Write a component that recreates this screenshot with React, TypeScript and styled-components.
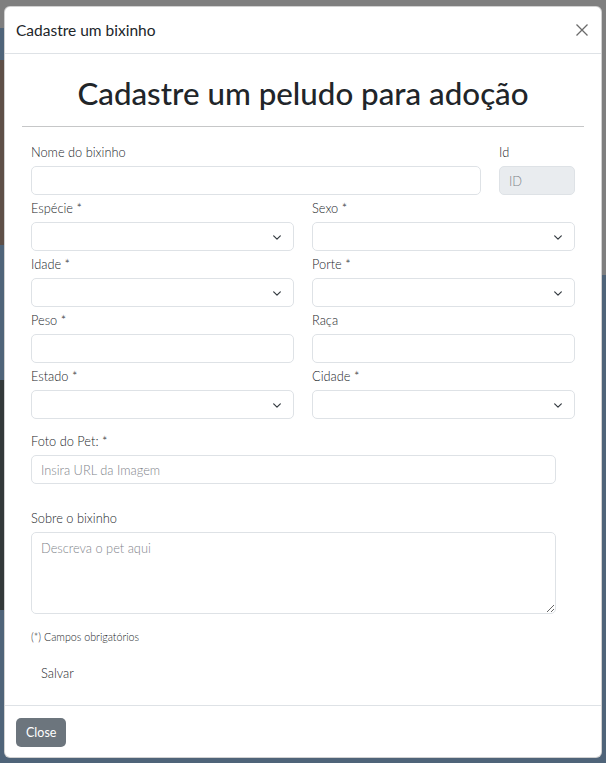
import styled, { createGlobalStyle } from "styled-components";

const GlobalStyle = createGlobalStyle`
  * { box-sizing: border-box; }
  body {
    margin: 0;
    font-family: "Lato", "Liberation Sans", sans-serif;
    color: #212529;
  }
`;

const Backdrop = styled.div`
  min-height: 763px;
  padding: 6px 4px 5px 4px;
  background:
    linear-gradient(#7f7f7f, #7f7f7f) right top / 50% 275px no-repeat,
    linear-gradient(#7f7f7f, #7f7f7f) left top / 50% 28px no-repeat,
    linear-gradient(#5e4f47, #5e4f47) left 60px / 50% 185px no-repeat,
    linear-gradient(#33393a, #33393a) left 380px / 50% 230px no-repeat,
    #4f6479;
`;

const Modal = styled.div`
  background: #fff;
  border: 1px solid rgba(0, 0, 0, 0.18);
  border-radius: 6px;
  display: flex;
  flex-direction: column;
  overflow: hidden;
`;

const Header = styled.div`
  display: flex;
  align-items: center;
  justify-content: space-between;
  height: 47px;
  padding: 0 12px 0 11px;
  border-bottom: 1px solid #dee2e6;
`;

const Title = styled.h5`
  margin: 0;
  font-size: 15.5px;
  font-weight: 400;
  line-height: 24px;
`;

const CloseX = styled.button`
  display: flex;
  align-items: center;
  justify-content: center;
  width: 14px;
  height: 14px;
  padding: 0;
  border: 0;
  background: transparent;
  color: #6b6b6b;
  cursor: pointer;
`;

const Body = styled.div`
  padding: 20px 17px 17px;
`;

const Heading = styled.h1`
  margin: 0;
  text-align: center;
  font-size: 31.3px;
  font-weight: 500;
  line-height: 38px;
`;

const Rule = styled.hr`
  margin: 14px 0 0;
  border: 0;
  border-top: 1px solid #c6c7c8;
`;

const Form = styled.form`
  padding: 15px 9px 0;
  display: flex;
  flex-direction: column;
`;

const Row = styled.div<{ $cols?: string; $mt?: number; $narrow?: boolean }>`
  display: grid;
  grid-template-columns: ${(p) => p.$cols || "1fr"};
  column-gap: 18px;
  margin-top: ${(p) => p.$mt ?? 3}px;
  max-width: ${(p) => (p.$narrow ? "525px" : "none")};
`;

const Field = styled.div`
  display: flex;
  flex-direction: column;
`;

const Label = styled.label`
  font-size: 12.8px;
  font-weight: 300;
  line-height: 20px;
  margin-bottom: 4px;
`;

const Input = styled.input<{ $disabled?: boolean }>`
  height: 29px;
  width: 100%;
  padding: 0 9px;
  font: inherit;
  font-size: 12.8px;
  font-weight: 300;
  color: #212529;
  background: ${(p) => (p.$disabled ? "#e9ecef" : "#fff")};
  border: 1px solid #dee2e6;
  border-radius: 5px;
  outline: none;

  &::placeholder {
    color: #7f858b;
  }
`;

const SelectWrap = styled.div`
  position: relative;
`;

const Select = styled.select`
  appearance: none;
  height: 29px;
  width: 100%;
  padding: 0 9px;
  font: inherit;
  font-size: 12.8px;
  background: #fff;
  border: 1px solid #dee2e6;
  border-radius: 5px;
  outline: none;
`;

const Chevron = styled.svg`
  position: absolute;
  right: 13px;
  top: 50%;
  margin-top: -2px;
  pointer-events: none;
`;

const TextArea = styled.textarea`
  height: 82px;
  width: 100%;
  padding: 6px 9px;
  font: inherit;
  font-size: 12.8px;
  font-weight: 300;
  line-height: 19px;
  border: 1px solid #dee2e6;
  border-radius: 5px;
  outline: none;
  resize: vertical;

  &::placeholder {
    color: #7f858b;
  }
`;

const Hint = styled.small`
  margin-top: 15px;
  font-size: 10.7px;
  font-weight: 300;
  line-height: 16px;
`;

const GhostButton = styled.button`
  align-self: flex-start;
  margin-top: 13px;
  height: 30px;
  padding: 0 10px;
  font: inherit;
  font-size: 12.8px;
  font-weight: 300;
  color: #212529;
  background: transparent;
  border: 0;
  border-radius: 5px;
`;

const Footer = styled.div`
  display: flex;
  padding: 12px 11px 10px;
  border-top: 1px solid #dee2e6;
`;

const SecondaryButton = styled.button`
  height: 29px;
  padding: 0 10px;
  font: inherit;
  font-size: 12.5px;
  color: #fff;
  background: #6c757d;
  border: 0;
  border-radius: 5px;
`;

const ChevronIcon = () => (
  <Chevron width="8" height="5" viewBox="0 0 12 7" fill="none">
    <path d="M1 1l5 5 5-5" stroke="#343a40" strokeWidth="1.8" strokeLinecap="round" strokeLinejoin="round" />
  </Chevron>
);

const SelectField = ({ label }: { label: string }) => (
  <Field>
    <Label>{label}</Label>
    <SelectWrap>
      <Select defaultValue="">
        <option value="" />
      </Select>
      <ChevronIcon />
    </SelectWrap>
  </Field>
);

const InputField = ({ label, placeholder }: { label: string; placeholder?: string }) => (
  <Field>
    <Label>{label}</Label>
    <Input placeholder={placeholder} />
  </Field>
);

export default function App() {
  return (
    <>
      <GlobalStyle />
      <Backdrop>
        <Modal>
          <Header>
            <Title>Cadastre um bixinho</Title>
            <CloseX aria-label="Close">
              <svg width="12" height="12" viewBox="0 0 12 12">
                <path d="M0.5 0.5l11 11M11.5 0.5l-11 11" stroke="currentColor" strokeWidth="1.3" />
              </svg>
            </CloseX>
          </Header>
          <Body>
            <Heading>Cadastre um peludo para adoção</Heading>
            <Rule />
            <Form onSubmit={(e) => e.preventDefault()}>
              <Row $cols="1fr 76px" $mt={0}>
                <InputField label="Nome do bixinho" />
                <Field>
                  <Label>Id</Label>
                  <Input $disabled placeholder="ID" disabled />
                </Field>
              </Row>
              <Row $cols="1fr 1fr">
                <SelectField label="Espécie *" />
                <SelectField label="Sexo *" />
              </Row>
              <Row $cols="1fr 1fr">
                <SelectField label="Idade *" />
                <SelectField label="Porte *" />
              </Row>
              <Row $cols="1fr 1fr">
                <InputField label="Peso *" />
                <InputField label="Raça" />
              </Row>
              <Row $cols="1fr 1fr">
                <SelectField label="Estado *" />
                <SelectField label="Cidade *" />
              </Row>
              <Row $mt={12} $narrow>
                <InputField label="Foto do Pet: *" placeholder="Insira URL da Imagem" />
              </Row>
              <Row $mt={24} $narrow>
                <Field>
                  <Label>Sobre o bixinho</Label>
                  <TextArea placeholder="Descreva o pet aqui" />
                </Field>
              </Row>
              <Hint>(*) Campos obrigatórios</Hint>
              <GhostButton type="submit">Salvar</GhostButton>
            </Form>
          </Body>
          <Footer>
            <SecondaryButton type="button">Close</SecondaryButton>
          </Footer>
        </Modal>
      </Backdrop>
    </>
  );
}
